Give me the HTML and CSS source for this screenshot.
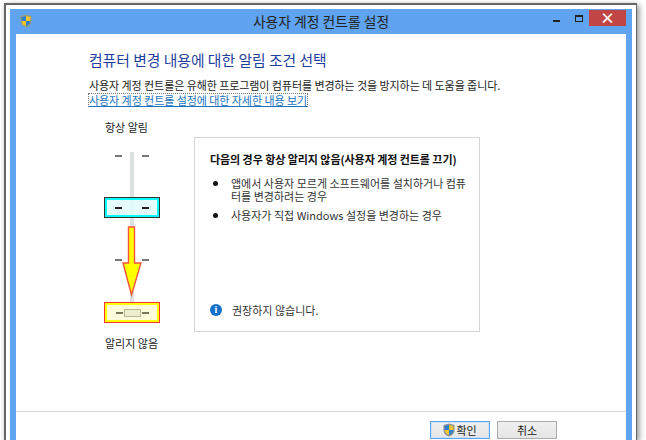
FILE: index.html
```html
<!DOCTYPE html>
<html>
<head>
    <meta charset="utf-8"/>
    <title>사용자 계정 컨트롤 설정</title>
    <link rel="stylesheet" href="styles.css">
</head>
<body>
<div class="frame">
    <div class="window">
        <div class="titleBar">
            <svg class="shield" width="12" height="14" viewBox="0 0 12 14">
                <path d="M6 .5 L11.5 2 V7 C11.5 10.5 9 12.5 6 13.5 C3 12.5 .5 10.5 .5 7 V2 Z" fill="#9a9a78"/>
                <path d="M6 2 V7 H1.7 V3 Z" fill="#2f7fd0"/>
                <path d="M6 2 L10.3 3 V7 H6 Z" fill="#f3c52c"/>
                <path d="M1.7 7 H6 V12 C3.6 11.2 1.7 9.6 1.7 7 Z" fill="#f3c52c"/>
                <path d="M6 7 H10.3 C10.3 9.6 8.4 11.2 6 12 Z" fill="#2f7fd0"/>
            </svg>
            <span class="titleText">사용자 계정 컨트롤 설정</span>
            <div class="winBtns">
                <span class="btnMin"></span>
                <span class="btnMax"></span>
                <span class="btnClose">×</span>
            </div>
        </div>
        <div class="content">
            <div class="main">
                <h1 class="heading">컴퓨터 변경 내용에 대한 알림 조건 선택</h1>
                <p class="desc">사용자 계정 컨트롤은 유해한 프로그램이 컴퓨터를 변경하는 것을 방지하는 데 도움을 줍니다.</p>
                <a class="moreLink">사용자 계정 컨트롤 설정에 대한 자세한 내용 보기</a>
                <div class="settings">
                    <div class="sliderCol">
                        <div class="sliderLabel">항상 알림</div>
                        <div class="slider">
                            <div class="track"></div>
                            <div class="tickRow"><i></i><i></i></div>
                            <div class="markBox cyan"><i></i><i></i></div>
                            <div class="tickRow"><i></i><i></i></div>
                            <div class="markBox yellow"><i></i><b class="thumb"></b><i></i></div>
                            <svg class="arrow" width="20" height="72" viewBox="0 0 20 72">
                                <path d="M6.5 1 H12.5 V37 H19 L9.5 69 L1 37 H6.5 Z" fill="#ffff00" stroke="#f4523a" stroke-width="1.4"/>
                            </svg>
                        </div>
                        <div class="sliderLabel bottomLabel">알리지 않음</div>
                    </div>
                    <div class="panel">
                        <div class="panelTitle">다음의 경우 항상 알리지 않음(사용자 계정 컨트롤 끄기)</div>
                        <ul class="panelList">
                            <li>앱에서 사용자 모르게 소프트웨어를 설치하거나 컴퓨터를 변경하려는 경우</li>
                            <li>사용자가 직접 Windows 설정을 변경하는 경우</li>
                        </ul>
                        <div class="notice">
                            <span class="infoIcon">i</span>
                            <span>권장하지 않습니다.</span>
                        </div>
                    </div>
                </div>
            </div>
            <div class="footer">
                <a class="btn btnDefault">
                    <svg width="12" height="14" viewBox="0 0 12 14">
                        <path d="M6 .5 L11.5 2 V7 C11.5 10.5 9 12.5 6 13.5 C3 12.5 .5 10.5 .5 7 V2 Z" fill="#8a8f98"/>
                        <path d="M6 2 V7 H1.7 V3 Z" fill="#2f7fd0"/>
                        <path d="M6 2 L10.3 3 V7 H6 Z" fill="#f3c52c"/>
                        <path d="M1.7 7 H6 V12 C3.6 11.2 1.7 9.6 1.7 7 Z" fill="#f3c52c"/>
                        <path d="M6 7 H10.3 C10.3 9.6 8.4 11.2 6 12 Z" fill="#2f7fd0"/>
                    </svg>확인</a>
                <a class="btn">취소</a>
            </div>
        </div>
    </div>
</div>
</body>
</html>
```

FILE: styles.css
```css
html, body { margin:0; padding:0; height:100%; background:#fff; overflow:hidden; }
body { font-family:"Noto Sans CJK KR", "Liberation Sans", sans-serif; color:#222; font-size:11px; }
h1, p, ul, li { margin:0; padding:0; }

.frame {
    margin:3px 0 0 4px;
    width:633px;
    height:437px;
    box-sizing:border-box;
    padding:4px 4px 0 4px;
    background:#fff;
    border:1px solid #666;
    border-width:2px 1px 0 2px;
    box-shadow:2px 2px 6px rgba(0,0,0,.45);
}
.window {
    height:100%;
    background:#5fa3f1;
    padding:0 6px;
    display:flex;
    flex-direction:column;
}

.titleBar { height:25px; flex:none; display:flex; align-items:center; position:relative; }
.shield { margin-left:4px; margin-top:-1px; }
.titleText {
    position:absolute; left:0; right:0; top:3px;
    text-align:center; font-size:13.8px; line-height:18px; color:#222;
}
.winBtns { margin-left:auto; margin-top:1px; align-self:flex-start; display:flex; align-items:flex-start; }
.btnMin { width:7px; height:2px; background:#222; margin:10px 15px 0 0; }
.btnMax { width:6px; height:4px; border:1px solid #222; border-top-width:2px; margin:5px 6px 0 0; }
.btnClose {
    width:37px; height:16px; background:#c14545; color:#fff;
    font-size:15px; line-height:15px; font-weight:bold; text-align:center;
}

.content { flex:1; background:#fff; display:flex; flex-direction:column; }
.main { height:378px; flex:none; box-sizing:border-box; padding:16px 0 0 73px; border-bottom:1px solid #d6d6d6; }
.heading { font-size:14.8px; line-height:20px; font-weight:normal; color:#1f3f9e; }
.desc { margin-top:8px; font-size:11px; line-height:14px; letter-spacing:-.07px; white-space:nowrap; }
.moreLink {
    display:inline-block; margin-left:-1px; font-size:11px; line-height:12px; letter-spacing:-.06px;
    color:#1a74c0; border:1px dotted #777; text-decoration:underline;
}

.settings { display:flex; margin-top:12px; }
.sliderCol { width:56px; margin-left:15px; display:flex; flex-direction:column; align-items:stretch; }
.sliderLabel { font-size:11px; line-height:14px; white-space:nowrap; margin-left:1px; }
.bottomLabel { margin-top:9px; }

.slider {
    position:relative; width:56px; height:176px; margin-top:17px;
    display:flex; flex-direction:column; align-items:stretch;
}
.track { position:absolute; left:26px; top:1px; bottom:14px; width:4px; background:#dde1e1; }
.tickRow, .markBox { position:relative; display:flex; justify-content:center; align-items:center; gap:20px; }
.tickRow { height:10px; }
.tickRow i, .markBox i { display:block; width:7px; height:2px; background:#777; }
.tickRow:nth-child(2) { margin-bottom:36px; }
.tickRow:nth-child(4) { margin-top:37px; margin-bottom:37px; }
.markBox { height:21px; box-sizing:border-box; }
.markBox.cyan { background:rgba(226,253,253,.85); border:1px solid #333; box-shadow:inset 0 0 0 2px #0ff; }
.markBox.cyan i { background:#222; }
.markBox.yellow { background:#fdfddc; border:1px solid #f33; box-shadow:inset 0 0 0 2px #ff0; gap:1px; }
.markBox.yellow i { background:#77775c; }
.thumb { width:15px; height:6px; background:#eeeecf; border:1px solid #b8b896; }
.arrow { position:absolute; left:18px; top:75px; }

.panel {
    width:286px; height:195px; box-sizing:border-box; margin:17px 0 0 34px;
    border:1px solid #d5d5d5; padding:14px 10px 0 15px;
    display:flex; flex-direction:column;
}
.panelTitle { font-size:11px; line-height:14px; font-weight:bold; color:#111; letter-spacing:-.06px; white-space:nowrap; }
.panelList { list-style:none; margin-top:11px; }
.panelList li { position:relative; padding-left:21px; font-size:11px; line-height:13px; color:#333; }
.panelList li + li { margin-top:6px; }
.panelList li:before {
    content:""; position:absolute; left:3px; top:4px;
    width:5px; height:5px; border-radius:50%; background:#111;
}
.notice { margin-top:auto; margin-bottom:14px; display:flex; align-items:center; gap:10px; font-size:11px; line-height:14px; color:#333; }
.infoIcon {
    width:12px; height:12px; border-radius:50%; background:#1470c8; color:#fff;
    font:bold 10px/12px "Liberation Serif", serif; text-align:center;
}

.footer { flex:1; display:flex; justify-content:flex-start; gap:7px; padding:9px 0 0 414px; align-items:flex-start; }
.btn {
    width:60px; height:18px; box-sizing:border-box; border:1px solid #acacac;
    background:linear-gradient(#f0f0f0, #e5e5e5);
    display:flex; align-items:center; justify-content:center; gap:1px;
    font-size:11px; line-height:15px; color:#222;
}
.btnDefault { border:1px solid #5fa3f1; box-shadow:inset 0 0 0 1px #cfe3f8; }
```
